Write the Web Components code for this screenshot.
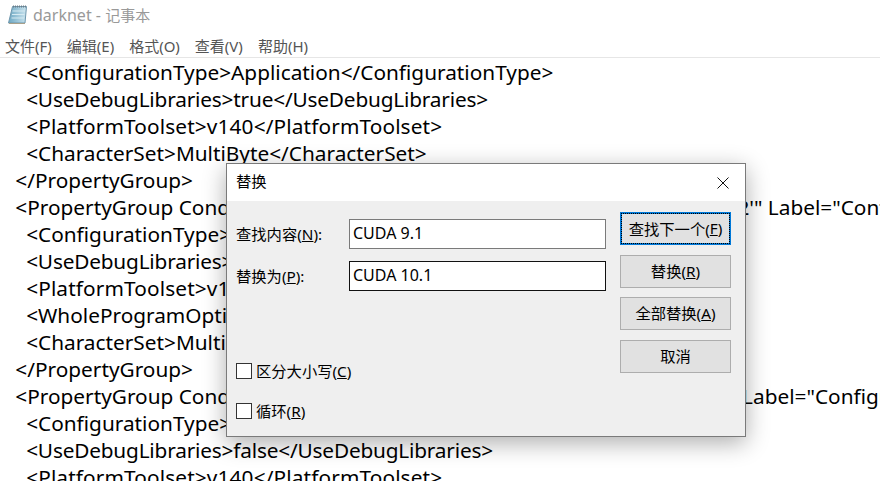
<!DOCTYPE html>
<html>
<head>
<meta charset="utf-8">
<title>darknet - 记事本</title>
<style>
  html, body { margin: 0; height: 100%; overflow: hidden; background: #fff; }
  .dbg { letter-spacing: -.18px; }
  .tool { letter-spacing: .13px; }
  .cond { letter-spacing: -.2px; }
</style>
</head>
<body>
<notepad-window heading="darknet - 记事本">
<pre>    &lt;ConfigurationType&gt;Application&lt;/ConfigurationType&gt;
    <span class="dbg">&lt;UseDebugLibraries&gt;true&lt;/UseDebugLibraries&gt;</span>
    <span class="tool">&lt;PlatformToolset&gt;v140&lt;/PlatformToolset&gt;</span>
    &lt;CharacterSet&gt;MultiByte&lt;/CharacterSet&gt;
  &lt;/PropertyGroup&gt;
  &lt;PropertyGroup Cond<span class="cond">ition="'$(Configuration)|$(Platform)'=='Release|Win32</span>'" Label="Configuration"&gt;
    &lt;ConfigurationType&gt;Application&lt;/ConfigurationType&gt;
    <span class="dbg">&lt;UseDebugLibraries&gt;false&lt;/UseDebugLibraries&gt;</span>
    <span class="tool">&lt;PlatformToolset&gt;v140&lt;/PlatformToolset&gt;</span>
    &lt;WholeProgramOptimization&gt;true&lt;/WholeProgramOptimization&gt;
    &lt;CharacterSet&gt;MultiByte&lt;/CharacterSet&gt;
  &lt;/PropertyGroup&gt;
  &lt;PropertyGroup Condition="'$(Configuration)|$(Platform)'=='Debug|x64'" Label="Configuration"&gt;
    &lt;ConfigurationType&gt;Application&lt;/ConfigurationType&gt;
    <span class="dbg">&lt;UseDebugLibraries&gt;false&lt;/UseDebugLibraries&gt;</span>
    <span class="tool">&lt;PlatformToolset&gt;v140&lt;/PlatformToolset&gt;</span></pre>
</notepad-window>
<replace-dialog></replace-dialog>

<script>
const UI_FONT = '"Noto Sans", "Noto Sans CJK SC", sans-serif';

class NotepadWindow extends HTMLElement {
  connectedCallback() {
    const root = this.attachShadow({ mode: 'open' });
    const menus = ['文件(F)', '编辑(E)', '格式(O)', '查看(V)', '帮助(H)'];
    const [doc, app] = this.getAttribute('heading').split(' - ');
    root.innerHTML = `
      <style>
        :host {
          display: flex;
          flex-direction: column;
          height: 481px;
          overflow: hidden;
          font-family: ${UI_FONT};
        }
        .titlebar {
          display: flex;
          align-items: center;
          gap: 5px;
          height: 31px;
          padding: 0 0 2px 8px;
          box-sizing: border-box;
          font-size: 16px;
          color: #999;
        }
        .titlebar small { font-size: 15px; }
        .menu {
          display: flex;
          gap: 15px;
          height: 27px;
          padding: 3px 0 0 5px;
          align-items: center;
          box-sizing: border-box;
          border-bottom: 1px solid #e6e6e6;
          font-size: 15px;
          color: #555;
        }
        .editor {
          flex: 1;
          overflow: hidden;
          padding: 1px 0 0 0;
        }
        ::slotted(pre) {
          margin: 0;
          padding-left: 4.5px;
          font: 20.8px/27px ${UI_FONT};
          color: #000;
          white-space: pre;
        }
      </style>
      <div class="titlebar">
        <svg width="20" height="20" viewBox="0 0 20 20">
          <defs>
            <linearGradient id="pad" x1="0" x2="1" y1="0" y2="0">
              <stop offset="0" stop-color="#6fa9c4"/>
              <stop offset="1" stop-color="#c9e3ee"/>
            </linearGradient>
          </defs>
          <path d="M4.5 1.5h14l-1.5 16.5H.5z" fill="url(#pad)" stroke="#6f97ad"/>
          <path d="M5 1.5h13" stroke="#6d7d88" stroke-width="2" stroke-dasharray="1 1"/>
          <path d="M4.5 6h12.5M4 9.5h12.5M3.5 13h12.5" stroke="#d6eaf2"/>
          <path d="M1 18.5h16" stroke="#a9a08a"/>
        </svg>
        <span>${doc} - <small>${app}</small></span>
      </div>
      <div class="menu">${menus.map(m => `<span>${m}</span>`).join('')}</div>
      <div class="editor"><slot></slot></div>
    `;
  }
}

class DialogButton extends HTMLElement {
  connectedCallback() {
    const root = this.attachShadow({ mode: 'open' });
    root.innerHTML = `
      <style>
        :host {
          display: flex;
          align-items: center;
          justify-content: center;
          height: 33px;
          padding-bottom: 4px;
          box-sizing: border-box;
          border: 1px solid #adadad;
          background: #e1e1e1;
          font-size: 15.3px;
          color: #000;
        }
        :host([primary]) { border: 2px solid #0078d7; padding-bottom: 0; }
        :host([primary]) .focus {
          align-self: stretch;
          flex: 1;
          display: flex;
          align-items: center;
          justify-content: center;
          padding-bottom: 2px;
          outline: 1px dotted #000;
        }
      </style>
      <div class="focus"><slot></slot></div>
    `;
  }
}

class FieldRow extends HTMLElement {
  connectedCallback() {
    const root = this.attachShadow({ mode: 'open' });
    root.innerHTML = `
      <style>
        :host {
          display: flex;
          align-items: center;
          font-size: 15.3px;
        }
        label { width: 113px; margin-top: -2px; }
        .input {
          width: 257px;
          height: 30px;
          box-sizing: border-box;
          border: 1px solid ${this.hasAttribute('active') ? '#111' : '#7a7a7a'};
          background: #fff;
          padding: 0 3px 3px;
          display: flex;
          align-items: center;
          font-size: 16px;
          color: #000;
        }
      </style>
      <label><slot></slot></label>
      <div class="input">${this.getAttribute('value')}</div>
    `;
  }
}

class CheckRow extends HTMLElement {
  connectedCallback() {
    const root = this.attachShadow({ mode: 'open' });
    root.innerHTML = `
      <style>
        :host {
          display: flex;
          align-items: center;
          gap: 4px;
          height: 24px;
          font-size: 15.3px;
        }
        .box {
          width: 16px;
          height: 16px;
          box-sizing: border-box;
          border: 1px solid #333;
          background: #fff;
        }
        span { margin-top: -2px; }
      </style>
      <div class="box"></div><span><slot></slot></span>
    `;
  }
}

class ReplaceDialog extends HTMLElement {
  connectedCallback() {
    const root = this.attachShadow({ mode: 'open' });
    root.innerHTML = `
      <style>
        :host {
          position: absolute;
          left: 226px;
          top: 163px;
          width: 520px;
          height: 274px;
          box-sizing: border-box;
          display: flex;
          flex-direction: column;
          border: 1px solid #7a7a7a;
          background: #efefef;
          box-shadow: 0 6px 22px rgba(0,0,0,.32);
          font-family: ${UI_FONT};
          color: #000;
        }
        .title {
          display: flex;
          justify-content: space-between;
          align-items: center;
          height: 37px;
          box-sizing: border-box;
          flex: none;
          padding: 0 15px 5px 9px;
          background: #fff;
          font-size: 15.3px;
        }
        .main {
          flex: 1;
          display: flex;
          justify-content: space-between;
          padding: 11px 14px 0 9px;
        }
        .left { display: flex; flex-direction: column; width: 370px; }
        .fields { display: flex; flex-direction: column; gap: 12px; padding-top: 7px; }
        .checks { display: flex; flex-direction: column; gap: 16px; margin-top: 68px; }
        .buttons { display: flex; flex-direction: column; gap: 10px; width: 111px; }
        .buttons dialog-button:nth-child(3) { margin-top: -1px; }
      </style>
      <div class="title">
        <span>替换</span>
        <svg width="14" height="14" viewBox="0 0 14 14" style="margin-top:5px">
          <path d="M1.5 1.5l11 11M12.5 1.5l-11 11" stroke="#111" fill="none"/>
        </svg>
      </div>
      <div class="main">
        <div class="left">
          <div class="fields">
            <field-row value="CUDA 9.1">查找内容(<u>N</u>):</field-row>
            <field-row value="CUDA 10.1" active>替换为(<u>P</u>):</field-row>
          </div>
          <div class="checks">
            <check-row>区分大小写(<u>C</u>)</check-row>
            <check-row>循环(<u>R</u>)</check-row>
          </div>
        </div>
        <div class="buttons">
          <dialog-button primary>查找下一个(<u>F</u>)</dialog-button>
          <dialog-button>替换(<u>R</u>)</dialog-button>
          <dialog-button>全部替换(<u>A</u>)</dialog-button>
          <dialog-button>取消</dialog-button>
        </div>
      </div>
    `;
  }
}

customElements.define('notepad-window', NotepadWindow);
customElements.define('dialog-button', DialogButton);
customElements.define('field-row', FieldRow);
customElements.define('check-row', CheckRow);
customElements.define('replace-dialog', ReplaceDialog);
</script>
</body>
</html>
